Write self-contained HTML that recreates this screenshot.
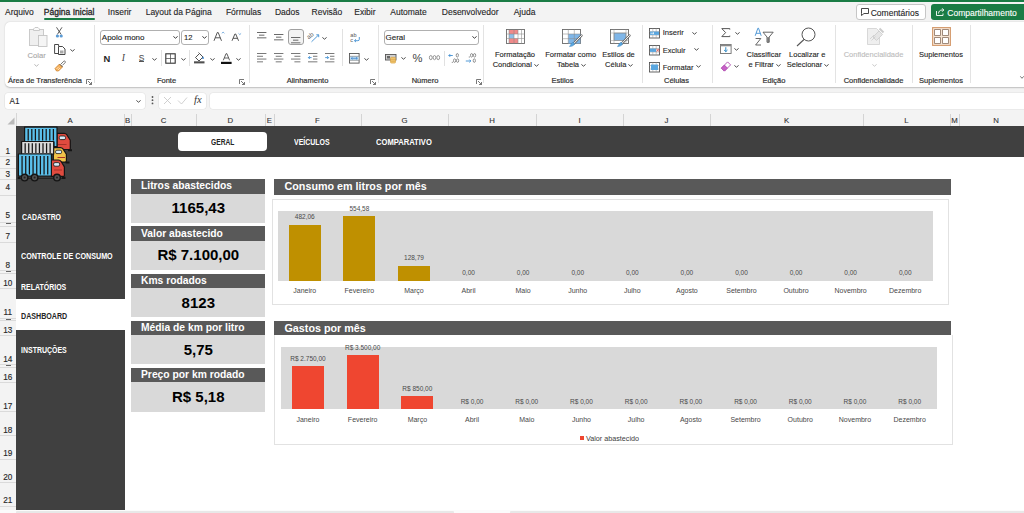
<!DOCTYPE html>
<html><head><meta charset="utf-8">
<style>
*{margin:0;padding:0;box-sizing:border-box}
html,body{width:1024px;height:513px;overflow:hidden;background:#f3f3f3;font-family:"Liberation Sans",sans-serif;position:relative}
.a{position:absolute}
.t{position:absolute;white-space:nowrap;line-height:1}
.kt{position:absolute;left:131px;width:134px;background:#595959}
.kv{position:absolute;left:131px;width:134px;background:#d9d9d9}
.hl{position:absolute;left:0;width:16px;height:1px;background:#d9d9d9}
.cl{position:absolute;top:113px;width:1px;height:13px;background:#d4d4d4}
svg{overflow:visible}
</style></head><body>
<div class="a" style="left:0px;top:0px;width:1024px;height:2px;background:#1a7c45;"></div>
<div class="t" style="left:4.97px;top:8.40px;font-size:8.50px;color:#262626;-webkit-text-stroke:0.12px currentColor;">Arquivo</div>
<div class="t" style="left:43.85px;top:8.40px;font-size:8.50px;color:#262626;-webkit-text-stroke:0.3px currentColor;">Página Inicial</div>
<div class="t" style="left:107.82px;top:8.40px;font-size:8.50px;color:#262626;-webkit-text-stroke:0.12px currentColor;">Inserir</div>
<div class="t" style="left:145.67px;top:8.40px;font-size:8.50px;color:#262626;-webkit-text-stroke:0.12px currentColor;">Layout da Página</div>
<div class="t" style="left:225.91px;top:8.40px;font-size:8.50px;color:#262626;-webkit-text-stroke:0.12px currentColor;">Fórmulas</div>
<div class="t" style="left:274.97px;top:8.40px;font-size:8.50px;color:#262626;-webkit-text-stroke:0.12px currentColor;">Dados</div>
<div class="t" style="left:311.52px;top:8.40px;font-size:8.50px;color:#262626;-webkit-text-stroke:0.12px currentColor;">Revisão</div>
<div class="t" style="left:354.25px;top:8.40px;font-size:8.50px;color:#262626;-webkit-text-stroke:0.12px currentColor;">Exibir</div>
<div class="t" style="left:390.31px;top:8.40px;font-size:8.50px;color:#262626;-webkit-text-stroke:0.12px currentColor;">Automate</div>
<div class="t" style="left:441.78px;top:8.40px;font-size:8.50px;color:#262626;-webkit-text-stroke:0.12px currentColor;">Desenvolvedor</div>
<div class="t" style="left:513.63px;top:8.40px;font-size:8.50px;color:#262626;-webkit-text-stroke:0.12px currentColor;">Ajuda</div>
<div class="a" style="left:44px;top:18px;width:51px;height:2px;background:#1a7c45;border-radius:1px"></div>
<div class="a" style="left:855.5px;top:4px;width:70px;height:16px;background:#fff;border:1px solid #c6c6c6;border-radius:3px"></div>
<svg class="a" style="left:861px;top:8px;" width="8" height="8" viewBox="0 0 8 8"><path d="M0.5 0.5h7v5h-4.5l-2.5 2v-2h0z" fill="none" stroke="#333" stroke-width="0.9" stroke-linejoin="round"/></svg>
<div class="t" style="left:870.71px;top:8.60px;font-size:8.50px;color:#262626;-webkit-text-stroke:0.12px currentColor;">Comentários</div>
<div class="a" style="left:931px;top:4px;width:100px;height:16px;background:#1a7c45;border-radius:3px"></div>
<svg class="a" style="left:936px;top:8px;" width="8" height="8" viewBox="0 0 8 8"><path d="M0.5 3v4.5h6.5V5.5" fill="none" stroke="#fff" stroke-width="0.9"/><path d="M2.5 5.5c0-2 1.5-3.5 3.5-3.5h1.5M6.2 0.3L7.8 2 6.2 3.7" fill="none" stroke="#fff" stroke-width="0.9"/></svg>
<div class="t" style="left:947.28px;top:8.60px;font-size:8.50px;color:#fff;-webkit-text-stroke:0.12px currentColor;">Compartilhamento</div>
<div class="a" style="left:5px;top:22px;width:1030px;height:65px;background:#fff;border-radius:5px;box-shadow:0 0.5px 1.5px rgba(0,0,0,0.22)"></div>
<div class="a" style="left:94px;top:25px;width:1px;height:58px;background:#e3e3e3;"></div>
<div class="a" style="left:249px;top:25px;width:1px;height:58px;background:#e3e3e3;"></div>
<div class="a" style="left:377.5px;top:25px;width:1px;height:58px;background:#e3e3e3;"></div>
<div class="a" style="left:483px;top:25px;width:1px;height:58px;background:#e3e3e3;"></div>
<div class="a" style="left:641.5px;top:25px;width:1px;height:58px;background:#e3e3e3;"></div>
<div class="a" style="left:712px;top:25px;width:1px;height:58px;background:#e3e3e3;"></div>
<div class="a" style="left:835px;top:25px;width:1px;height:58px;background:#e3e3e3;"></div>
<div class="a" style="left:911.5px;top:25px;width:1px;height:58px;background:#e3e3e3;"></div>
<div class="a" style="left:970px;top:25px;width:1px;height:58px;background:#e3e3e3;"></div>
<div class="t" style="left:8.11px;top:77.15px;font-size:7.50px;color:#333333;-webkit-text-stroke:0.2px currentColor;">Área de Transferência</div>
<div class="t" style="left:156.91px;top:77.15px;font-size:7.50px;color:#333333;-webkit-text-stroke:0.2px currentColor;">Fonte</div>
<div class="t" style="left:286.65px;top:77.15px;font-size:7.50px;color:#333333;-webkit-text-stroke:0.2px currentColor;">Alinhamento</div>
<div class="t" style="left:411.66px;top:77.15px;font-size:7.50px;color:#333333;-webkit-text-stroke:0.2px currentColor;">Número</div>
<div class="t" style="left:551.46px;top:77.15px;font-size:7.50px;color:#333333;-webkit-text-stroke:0.2px currentColor;">Estilos</div>
<div class="t" style="left:663.99px;top:77.15px;font-size:7.50px;color:#333333;-webkit-text-stroke:0.2px currentColor;">Células</div>
<div class="t" style="left:762.53px;top:77.15px;font-size:7.50px;color:#333333;-webkit-text-stroke:0.2px currentColor;">Edição</div>
<div class="t" style="left:843.69px;top:77.15px;font-size:7.50px;color:#333333;-webkit-text-stroke:0.2px currentColor;">Confidencialidade</div>
<div class="t" style="left:919.11px;top:77.15px;font-size:7.50px;color:#333333;-webkit-text-stroke:0.2px currentColor;">Suplementos</div>
<svg class="a" style="left:86px;top:78.5px;" width="6" height="6" viewBox="0 0 6 6"><path d="M0.5 5V0.5H5" fill="none" stroke="#555" stroke-width="0.8"/><path d="M2 2L5.5 5.5M5.5 3v2.5H3" fill="none" stroke="#555" stroke-width="0.8"/></svg>
<svg class="a" style="left:239px;top:78.5px;" width="6" height="6" viewBox="0 0 6 6"><path d="M0.5 5V0.5H5" fill="none" stroke="#555" stroke-width="0.8"/><path d="M2 2L5.5 5.5M5.5 3v2.5H3" fill="none" stroke="#555" stroke-width="0.8"/></svg>
<svg class="a" style="left:370px;top:78.5px;" width="6" height="6" viewBox="0 0 6 6"><path d="M0.5 5V0.5H5" fill="none" stroke="#555" stroke-width="0.8"/><path d="M2 2L5.5 5.5M5.5 3v2.5H3" fill="none" stroke="#555" stroke-width="0.8"/></svg>
<svg class="a" style="left:476px;top:78.5px;" width="6" height="6" viewBox="0 0 6 6"><path d="M0.5 5V0.5H5" fill="none" stroke="#555" stroke-width="0.8"/><path d="M2 2L5.5 5.5M5.5 3v2.5H3" fill="none" stroke="#555" stroke-width="0.8"/></svg>
<svg class="a" style="left:28px;top:27px;" width="20" height="20" viewBox="0 0 20 20"><path d="M1.5 2.5h4.5M11 2.5h4.5v6.5M15.5 18.5H1.5V2.5" fill="#f0f0f0" stroke="#c8c8c8" stroke-width="0.9"/><rect x="1.5" y="2.5" width="14" height="16" fill="#efefef" stroke="#c8c8c8" stroke-width="0.9"/><path d="M5.5 3.5V2l1.5-1.5h3L11.5 2v1.5z" fill="#fafafa" stroke="#c4c4c4" stroke-width="0.9"/><rect x="10.5" y="8.5" width="8.5" height="11" fill="#f5f5f5" stroke="#c4c4c4" stroke-width="0.9"/></svg>
<div class="t" style="left:27.52px;top:51.97px;font-size:7.60px;color:#a8a8a8;-webkit-text-stroke:0.12px currentColor;">Colar</div>
<svg class="a" style="left:34px;top:64px;" width="5" height="3" viewBox="0 0 5 3"><path d="M0.7 0.7L2.5 2.2L4.3 0.7" fill="none" stroke="#b4b4b4" stroke-width="0.95" stroke-linecap="round" stroke-linejoin="round"/></svg>
<svg class="a" style="left:55px;top:27px;" width="9" height="11" viewBox="0 0 9 11"><path d="M1.5 0.3L6.2 7.5M7 0.3L2.3 7.5" stroke="#333" stroke-width="0.8" fill="none"/><circle cx="2.4" cy="9" r="1.6" fill="#5b9bd5"/><circle cx="6.2" cy="9" r="1.6" fill="#5b9bd5"/></svg>
<svg class="a" style="left:54px;top:44px;" width="12" height="11" viewBox="0 0 12 11"><path d="M4 9.5H0.6V0.5h4v1.5" fill="none" stroke="#333" stroke-width="0.9"/><path d="M4.5 2.5h4l2.5 2.5v5.5H4.5z" fill="#fff" stroke="#333" stroke-width="0.9"/><rect x="6" y="6.5" width="3.5" height="3" fill="#aaa"/></svg>
<svg class="a" style="left:70px;top:49px;" width="5" height="3" viewBox="0 0 5 3"><path d="M0.7 0.7L2.5 2.2L4.3 0.7" fill="none" stroke="#444" stroke-width="0.95" stroke-linecap="round" stroke-linejoin="round"/></svg>
<svg class="a" style="left:54px;top:60px;" width="12" height="11" viewBox="0 0 12 11"><path d="M7 4l2.8-2.8a1 1 0 011.4 1.4L8.4 5.4" fill="#fff" stroke="#555" stroke-width="0.8"/><path d="M1 8.5L5.5 4l3 3L4.5 11H2.5z" fill="#f6b05a" stroke="#c87a20" stroke-width="0.7"/><path d="M5.8 4.2l2.8 2.8" stroke="#555" stroke-width="0.9"/><path d="M2.5 9l2.2-2.2M3.8 10.2l2.2-2.2" stroke="#fff" stroke-width="0.6"/></svg>
<div class="a" style="left:99.6px;top:29.6px;width:80px;height:15.3px;background:#fff;border:1px solid #b0b0b0;border-radius:3px"></div>
<div class="t" style="left:101.80px;top:34.03px;font-size:8.00px;color:#262626;-webkit-text-stroke:0.12px currentColor;">Apolo mono</div>
<svg class="a" style="left:173px;top:36px;" width="5" height="3" viewBox="0 0 5 3"><path d="M0.7 0.7L2.5 2.2L4.3 0.7" fill="none" stroke="#333" stroke-width="0.95" stroke-linecap="round" stroke-linejoin="round"/></svg>
<div class="a" style="left:181.4px;top:29.6px;width:28px;height:15.3px;background:#fff;border:1px solid #b0b0b0;border-radius:3px"></div>
<div class="t" style="left:184.00px;top:34.37px;font-size:7.60px;color:#262626;-webkit-text-stroke:0.12px currentColor;">12</div>
<svg class="a" style="left:202px;top:36px;" width="5" height="3" viewBox="0 0 5 3"><path d="M0.7 0.7L2.5 2.2L4.3 0.7" fill="none" stroke="#333" stroke-width="0.95" stroke-linecap="round" stroke-linejoin="round"/></svg>
<svg class="a" style="left:213px;top:31px;" width="14" height="11" viewBox="0 0 14 11"><path d="M1 9.8L4.3 1.5h0.9L8.5 9.8M2.3 6.8h4.9" fill="none" stroke="#444" stroke-width="0.9"/><path d="M8.8 2.3l1.3-1.2 1.3 1.2" fill="none" stroke="#5b9bd5" stroke-width="0.8"/></svg>
<svg class="a" style="left:231px;top:33px;" width="14" height="9" viewBox="0 0 14 9"><path d="M1 7.8L3.9 1h0.8L7.6 7.8M2.1 5.3h4.4" fill="none" stroke="#444" stroke-width="0.9"/><path d="M7.5 0.4l1.3 1.2 1.3-1.2" fill="none" stroke="#5b9bd5" stroke-width="0.8"/></svg>
<div class="t" style="left:103.60px;top:53.64px;font-size:9.40px;color:#262626; font-weight:bold;">N</div>
<div class="t" style="left:121.8px;top:52.6px;font-size:9.6px;color:#444;font-family:'Liberation Serif',serif;font-style:italic">I</div>
<div class="t" style="left:138.80px;top:54.09px;font-size:8.40px;color:#555;-webkit-text-stroke:0.12px currentColor;">S</div>
<div class="a" style="left:138.6px;top:61.3px;width:5.8px;height:0.9px;background:#555;"></div>
<svg class="a" style="left:152px;top:58px;" width="5" height="3" viewBox="0 0 5 3"><path d="M0.7 0.7L2.5 2.2L4.3 0.7" fill="none" stroke="#444" stroke-width="0.95" stroke-linecap="round" stroke-linejoin="round"/></svg>
<div class="a" style="left:189.4px;top:50px;width:1px;height:15.5px;background:#e1e1e1;"></div>
<div class="a" style="left:160.5px;top:50px;width:1px;height:15.5px;background:#e1e1e1;"></div>
<svg class="a" style="left:164.5px;top:52.5px;" width="11" height="11" viewBox="0 0 11 11"><rect x="0.8" y="0.8" width="9.4" height="9.4" fill="none" stroke="#333" stroke-width="1.1"/><path d="M5.5 0.8v9.4M0.8 5.5h9.4" stroke="#555" stroke-width="0.8"/></svg>
<svg class="a" style="left:181px;top:58px;" width="5" height="3" viewBox="0 0 5 3"><path d="M0.7 0.7L2.5 2.2L4.3 0.7" fill="none" stroke="#444" stroke-width="0.95" stroke-linecap="round" stroke-linejoin="round"/></svg>
<svg class="a" style="left:193.5px;top:52px;" width="12" height="12" viewBox="0 0 12 12"><path d="M1.5 5.5l4-4 3.5 3.5-4 4z" fill="#fff" stroke="#333" stroke-width="0.85"/><path d="M5.5 1.5l-1-1" stroke="#333" stroke-width="0.8"/><path d="M9 4.2c.6.9.9 1.5.9 1.9a.9.9 0 01-1.8 0c0-.4.3-1 .9-1.9z" fill="#2f7ac5"/><rect x="0" y="9.3" width="10.5" height="2.1" fill="#505050"/></svg>
<svg class="a" style="left:210px;top:58px;" width="5" height="3" viewBox="0 0 5 3"><path d="M0.7 0.7L2.5 2.2L4.3 0.7" fill="none" stroke="#444" stroke-width="0.95" stroke-linecap="round" stroke-linejoin="round"/></svg>
<svg class="a" style="left:220.5px;top:52.5px;" width="11" height="12" viewBox="0 0 11 12"><path d="M2.3 7.3L5 0.7h0.9l2.7 6.6M3.3 5h4.3" fill="none" stroke="#444" stroke-width="0.85"/><rect x="0" y="8.8" width="10.6" height="2.2" fill="#111"/></svg>
<svg class="a" style="left:236px;top:58px;" width="5" height="3" viewBox="0 0 5 3"><path d="M0.7 0.7L2.5 2.2L4.3 0.7" fill="none" stroke="#444" stroke-width="0.95" stroke-linecap="round" stroke-linejoin="round"/></svg>
<svg class="a" style="left:257.3px;top:32px;" width="11" height="12" viewBox="0 0 11 12"><rect x="0" y="0.0" width="9.4" height="0.9" fill="#5a5a5a"/><rect x="2" y="2.7" width="5.4" height="0.9" fill="#5a5a5a"/><rect x="0" y="5.4" width="9.4" height="0.9" fill="#5a5a5a"/></svg>
<svg class="a" style="left:274.3px;top:34px;" width="11" height="12" viewBox="0 0 11 12"><rect x="0" y="0.0" width="9.4" height="0.9" fill="#5a5a5a"/><rect x="2" y="2.7" width="5.4" height="0.9" fill="#5a5a5a"/><rect x="0" y="5.4" width="9.4" height="0.9" fill="#5a5a5a"/></svg>
<div class="a" style="left:288.3px;top:29.3px;width:15.5px;height:15.8px;background:#f3f3f3;border:1px solid #a0a0a0;border-radius:3px"></div>
<svg class="a" style="left:291.3px;top:37px;" width="11" height="12" viewBox="0 0 11 12"><rect x="0" y="0.0" width="9.4" height="0.9" fill="#5a5a5a"/><rect x="2" y="2.7" width="5.4" height="0.9" fill="#5a5a5a"/><rect x="0" y="5.4" width="9.4" height="0.9" fill="#5a5a5a"/></svg>
<svg class="a" style="left:307px;top:31px;" width="18" height="12" viewBox="0 0 18 12"><text x="0" y="6.5" font-size="6.2" fill="#555" font-family="Liberation Sans" transform="rotate(-40 3.5 5)">ab</text><path d="M4.5 10.8L11.5 4M9.3 3.8h2.4v2.4" fill="none" stroke="#3f8fd2" stroke-width="0.9"/></svg>
<svg class="a" style="left:322px;top:37px;" width="5" height="3" viewBox="0 0 5 3"><path d="M0.7 0.7L2.5 2.2L4.3 0.7" fill="none" stroke="#444" stroke-width="0.95" stroke-linecap="round" stroke-linejoin="round"/></svg>
<svg class="a" style="left:257.3px;top:53px;" width="11" height="12" viewBox="0 0 11 12"><rect x="0" y="0.0" width="9.4" height="0.9" fill="#6a6a6a"/><rect x="0" y="2.8" width="6" height="0.9" fill="#6a6a6a"/><rect x="0" y="5.6" width="9.4" height="0.9" fill="#6a6a6a"/><rect x="0" y="8.399999999999999" width="6" height="0.9" fill="#6a6a6a"/></svg>
<svg class="a" style="left:274.3px;top:53px;" width="11" height="12" viewBox="0 0 11 12"><rect x="0" y="0.0" width="9.4" height="0.9" fill="#6a6a6a"/><rect x="1.7" y="2.8" width="6" height="0.9" fill="#6a6a6a"/><rect x="0" y="5.6" width="9.4" height="0.9" fill="#6a6a6a"/><rect x="1.7" y="8.399999999999999" width="6" height="0.9" fill="#6a6a6a"/></svg>
<svg class="a" style="left:291.3px;top:53px;" width="11" height="12" viewBox="0 0 11 12"><rect x="0" y="0.0" width="9.4" height="0.9" fill="#6a6a6a"/><rect x="3.4" y="2.8" width="6" height="0.9" fill="#6a6a6a"/><rect x="0" y="5.6" width="9.4" height="0.9" fill="#6a6a6a"/><rect x="3.4" y="8.399999999999999" width="6" height="0.9" fill="#6a6a6a"/></svg>
<svg class="a" style="left:308.3px;top:53px;" width="11" height="10" viewBox="0 0 11 10"><rect x="0" y="0" width="9.4" height="0.9" fill="#6a6a6a"/><rect x="5" y="2.8" width="4.4" height="0.9" fill="#6a6a6a"/><rect x="5" y="5.6" width="4.4" height="0.9" fill="#6a6a6a"/><rect x="0" y="8.4" width="9.4" height="0.9" fill="#6a6a6a"/><path d="M3.6 4.6H0.4M1.8 3.2L0.4 4.6 1.8 6" fill="none" stroke="#3f8fd2" stroke-width="0.9"/></svg>
<svg class="a" style="left:325.3px;top:53px;" width="11" height="10" viewBox="0 0 11 10"><rect x="0" y="0" width="9.4" height="0.9" fill="#6a6a6a"/><rect x="5" y="2.8" width="4.4" height="0.9" fill="#6a6a6a"/><rect x="5" y="5.6" width="4.4" height="0.9" fill="#6a6a6a"/><rect x="0" y="8.4" width="9.4" height="0.9" fill="#6a6a6a"/><path d="M0.2 4.6h3.4M2.2 3.2L3.6 4.6 2.2 6" fill="none" stroke="#3f8fd2" stroke-width="0.9"/></svg>
<div class="a" style="left:342.3px;top:28.5px;width:1px;height:37px;background:#e1e1e1;"></div>
<svg class="a" style="left:350px;top:32px;" width="12" height="11" viewBox="0 0 12 11"><text x="0.3" y="4.8" font-size="5.6" fill="#555" font-family="Liberation Sans">ab</text><text x="0.3" y="9.8" font-size="5.6" fill="#555" font-family="Liberation Sans">c</text><path d="M9.3 5v2.3a1.4 1.4 0 01-1.4 1.4H4.6M6 7.3L4.5 8.7 6 10.1" fill="none" stroke="#3f8fd2" stroke-width="0.9"/></svg>
<svg class="a" style="left:349px;top:53px;" width="11" height="11" viewBox="0 0 11 11"><rect x="0.5" y="0.5" width="9.6" height="9.6" fill="#fff" stroke="#555" stroke-width="0.9"/><rect x="1" y="3.3" width="8.6" height="4" fill="#bcdcf5"/><path d="M0.5 3.3h9.6M0.5 7.3h9.6" stroke="#777" stroke-width="0.6"/><path d="M2.3 5.3h6M3.5 4.3L2.3 5.3l1.2 1M7.1 4.3l1.2 1-1.2 1" fill="none" stroke="#2f7ac5" stroke-width="0.7"/></svg>
<svg class="a" style="left:364px;top:58px;" width="5" height="3" viewBox="0 0 5 3"><path d="M0.7 0.7L2.5 2.2L4.3 0.7" fill="none" stroke="#444" stroke-width="0.95" stroke-linecap="round" stroke-linejoin="round"/></svg>
<div class="a" style="left:383.5px;top:29.5px;width:95px;height:15.3px;background:#fff;border:1px solid #b0b0b0;border-radius:3px"></div>
<div class="t" style="left:385.50px;top:33.93px;font-size:8.00px;color:#262626;-webkit-text-stroke:0.12px currentColor;">Geral</div>
<svg class="a" style="left:472px;top:36px;" width="5" height="3" viewBox="0 0 5 3"><path d="M0.7 0.7L2.5 2.2L4.3 0.7" fill="none" stroke="#333" stroke-width="0.95" stroke-linecap="round" stroke-linejoin="round"/></svg>
<svg class="a" style="left:385px;top:54px;" width="12" height="10" viewBox="0 0 12 10"><rect x="0.5" y="0.5" width="10.5" height="5.5" fill="#d0d0d0" stroke="#555" stroke-width="0.9"/><rect x="2" y="2" width="3" height="2.5" fill="#666"/><rect x="5.5" y="3.3" width="5" height="5.8" rx="1" fill="#f3c873" stroke="#d39a35" stroke-width="0.6"/><path d="M5.8 5.3h4.4M5.8 7.2h4.4" stroke="#c8902e" stroke-width="0.5"/></svg>
<svg class="a" style="left:401px;top:57px;" width="5" height="3" viewBox="0 0 5 3"><path d="M0.7 0.7L2.5 2.2L4.3 0.7" fill="none" stroke="#444" stroke-width="0.95" stroke-linecap="round" stroke-linejoin="round"/></svg>
<div class="t" style="left:412.6px;top:53.2px;font-size:11.2px;color:#444">%</div>
<svg class="a" style="left:429px;top:55px;" width="12" height="6" viewBox="0 0 12 6"><g fill="none" stroke="#8a8a8a" stroke-width="0.9"><ellipse cx="1.8" cy="2.6" rx="1.4" ry="2.1"/><ellipse cx="5.5" cy="2.6" rx="1.4" ry="2.1"/><ellipse cx="9.2" cy="2.6" rx="1.4" ry="2.1"/></g></svg>
<div class="a" style="left:444.4px;top:50.5px;width:1px;height:15.5px;background:#e1e1e1;"></div>
<svg class="a" style="left:448px;top:53px;" width="12" height="11" viewBox="0 0 12 11"><path d="M4.8 2.5H0.8M2.2 1.1L0.8 2.5l1.4 1.4" fill="none" stroke="#3f8fd2" stroke-width="0.9"/><g fill="none" stroke="#777" stroke-width="0.8"><ellipse cx="9.3" cy="2.3" rx="1.1" ry="1.8"/><ellipse cx="6.6" cy="7.6" rx="1.1" ry="1.8"/><ellipse cx="9.6" cy="7.6" rx="1.1" ry="1.8"/></g><rect x="3.8" y="8.8" width="1" height="1" fill="#777"/></svg>
<svg class="a" style="left:465px;top:53px;" width="12" height="11" viewBox="0 0 12 11"><g fill="none" stroke="#777" stroke-width="0.8"><ellipse cx="6.6" cy="2.3" rx="1.1" ry="1.8"/><ellipse cx="9.6" cy="2.3" rx="1.1" ry="1.8"/><ellipse cx="9.3" cy="7.6" rx="1.1" ry="1.8"/></g><rect x="3.8" y="3.5" width="1" height="1" fill="#777"/><path d="M0.8 8h5M4.4 6.6L5.8 8 4.4 9.4" fill="none" stroke="#3f8fd2" stroke-width="0.9"/></svg>
<svg class="a" style="left:506px;top:29px;" width="19" height="15" viewBox="0 0 19 15"><rect x="0.5" y="0.5" width="18" height="14" fill="#fff" stroke="#6a6a6a" stroke-width="0.9"/><rect x="3" y="1" width="9" height="4" fill="#f08a8a"/><rect x="3" y="5" width="5" height="4.5" fill="#8fbfe8"/><rect x="3" y="9.5" width="9" height="4.5" fill="#f08a8a"/><path d="M3 0.5v14M8 0.5v14M12 0.5v14M15.5 0.5v14M0.5 5h18M0.5 9.5h18" stroke="#8a8a8a" stroke-width="0.55"/></svg>
<svg class="a" style="left:561.5px;top:29px;" width="22" height="19" viewBox="0 0 22 19"><rect x="0.5" y="0.5" width="18" height="14" fill="#fff" stroke="#6a6a6a" stroke-width="0.9"/><rect x="6.3" y="5" width="12" height="9.5" fill="#7fb6e8"/><path d="M6.3 0.5v14M12.3 0.5v14M0.5 5h18M0.5 9.7h18" stroke="#8a8a8a" stroke-width="0.55"/><path d="M19.5 6.5L11.5 14.8" stroke="#6a6a6a" stroke-width="2.4" stroke-linecap="round"/><path d="M19.5 6.5L11.5 14.8" stroke="#fff" stroke-width="1" stroke-linecap="round"/><path d="M9.8 14c1.2-1 2.8-.2 2.5 1.2-.3 1.2-2 2.2-4.8 2.4.9-1 1.3-2.8 2.3-3.6z" fill="#5aa7e0" stroke="#3c84c0" stroke-width="0.5"/></svg>
<svg class="a" style="left:609.5px;top:29px;" width="22" height="19" viewBox="0 0 22 19"><rect x="0.5" y="0.5" width="18" height="14" fill="#fff" stroke="#6a6a6a" stroke-width="0.9"/><rect x="4" y="4" width="12" height="7.5" fill="#7fb6e8" stroke="#6a6a6a" stroke-width="0.5"/><path d="M0.5 4h18M0.5 11.5h18M4 0.5v14M16 0.5v14" stroke="#9a9a9a" stroke-width="0.5"/><path d="M19.5 6.5L11.5 14.8" stroke="#6a6a6a" stroke-width="2.4" stroke-linecap="round"/><path d="M19.5 6.5L11.5 14.8" stroke="#fff" stroke-width="1" stroke-linecap="round"/><path d="M9.8 14c1.2-1 2.8-.2 2.5 1.2-.3 1.2-2 2.2-4.8 2.4.9-1 1.3-2.8 2.3-3.6z" fill="#5aa7e0" stroke="#3c84c0" stroke-width="0.5"/></svg>
<div class="t" style="left:494.99px;top:51.15px;font-size:7.50px;color:#262626;-webkit-text-stroke:0.12px currentColor;">Formatação</div>
<div class="t" style="left:492.66px;top:61.45px;font-size:7.50px;color:#262626;-webkit-text-stroke:0.12px currentColor;">Condicional</div>
<svg class="a" style="left:534px;top:64px;" width="5" height="3" viewBox="0 0 5 3"><path d="M0.7 0.7L2.5 2.2L4.3 0.7" fill="none" stroke="#444" stroke-width="0.95" stroke-linecap="round" stroke-linejoin="round"/></svg>
<div class="t" style="left:545.28px;top:51.15px;font-size:7.50px;color:#262626;-webkit-text-stroke:0.12px currentColor;">Formatar como</div>
<div class="t" style="left:556.90px;top:61.45px;font-size:7.50px;color:#262626;-webkit-text-stroke:0.12px currentColor;">Tabela</div>
<svg class="a" style="left:581px;top:64px;" width="5" height="3" viewBox="0 0 5 3"><path d="M0.7 0.7L2.5 2.2L4.3 0.7" fill="none" stroke="#444" stroke-width="0.95" stroke-linecap="round" stroke-linejoin="round"/></svg>
<div class="t" style="left:602.24px;top:51.15px;font-size:7.50px;color:#262626;-webkit-text-stroke:0.12px currentColor;">Estilos de</div>
<div class="t" style="left:605.12px;top:61.45px;font-size:7.50px;color:#262626;-webkit-text-stroke:0.12px currentColor;">Célula</div>
<svg class="a" style="left:628px;top:64px;" width="5" height="3" viewBox="0 0 5 3"><path d="M0.7 0.7L2.5 2.2L4.3 0.7" fill="none" stroke="#444" stroke-width="0.95" stroke-linecap="round" stroke-linejoin="round"/></svg>
<svg class="a" style="left:649px;top:27.5px;" width="12" height="11" viewBox="0 0 12 11"><rect x="0.5" y="0.5" width="10" height="9.5" fill="#fff" stroke="#555" stroke-width="0.9"/><path d="M0.5 3.5h10M0.5 7h10M3.8 0.5v9.5M7.2 0.5v9.5" stroke="#9a9a9a" stroke-width="0.55"/><rect x="1" y="3.6" width="9" height="3.3" fill="#5aa7e0"/><path d="M1.5 5.25h3.5M3.8 4.1L5 5.25 3.8 6.4" fill="none" stroke="#fff" stroke-width="0.7"/></svg>
<div class="t" style="left:662.70px;top:29.47px;font-size:7.60px;color:#262626;-webkit-text-stroke:0.12px currentColor;">Inserir</div>
<svg class="a" style="left:692px;top:32px;" width="5" height="3" viewBox="0 0 5 3"><path d="M0.7 0.7L2.5 2.2L4.3 0.7" fill="none" stroke="#444" stroke-width="0.95" stroke-linecap="round" stroke-linejoin="round"/></svg>
<svg class="a" style="left:649px;top:44.5px;" width="12" height="11" viewBox="0 0 12 11"><rect x="0.5" y="0.5" width="10" height="9.5" fill="#fff" stroke="#555" stroke-width="0.9"/><path d="M0.5 3.5h10M0.5 7h10M3.8 0.5v9.5M7.2 0.5v9.5" stroke="#9a9a9a" stroke-width="0.55"/><rect x="1" y="3.6" width="6" height="3.3" fill="#5aa7e0"/><path d="M7.6 3.8l2.4 2.9M10 3.8L7.6 6.7" stroke="#e05050" stroke-width="0.8"/></svg>
<div class="t" style="left:662.70px;top:46.77px;font-size:7.60px;color:#262626;-webkit-text-stroke:0.12px currentColor;">Excluir</div>
<svg class="a" style="left:694px;top:48px;" width="5" height="3" viewBox="0 0 5 3"><path d="M0.7 0.7L2.5 2.2L4.3 0.7" fill="none" stroke="#444" stroke-width="0.95" stroke-linecap="round" stroke-linejoin="round"/></svg>
<svg class="a" style="left:649px;top:61.5px;" width="12" height="11" viewBox="0 0 12 11"><rect x="0.5" y="0.5" width="10" height="9.5" fill="#fff" stroke="#555" stroke-width="0.9"/><path d="M0.5 3.5h10M0.5 7h10M3.8 0.5v9.5M7.2 0.5v9.5" stroke="#9a9a9a" stroke-width="0.55"/><rect x="2" y="2.5" width="7" height="5.5" fill="#5aa7e0"/></svg>
<div class="t" style="left:662.70px;top:63.57px;font-size:7.60px;color:#262626;-webkit-text-stroke:0.12px currentColor;">Formatar</div>
<svg class="a" style="left:696px;top:65px;" width="5" height="3" viewBox="0 0 5 3"><path d="M0.7 0.7L2.5 2.2L4.3 0.7" fill="none" stroke="#444" stroke-width="0.95" stroke-linecap="round" stroke-linejoin="round"/></svg>
<svg class="a" style="left:721px;top:27.5px;" width="10" height="10" viewBox="0 0 10 10"><path d="M8.8 1.6V0.6H0.8L4.6 4.6 0.8 8.6h8V7.6" fill="none" stroke="#444" stroke-width="0.9"/></svg>
<svg class="a" style="left:735px;top:32px;" width="5" height="3" viewBox="0 0 5 3"><path d="M0.7 0.7L2.5 2.2L4.3 0.7" fill="none" stroke="#444" stroke-width="0.95" stroke-linecap="round" stroke-linejoin="round"/></svg>
<svg class="a" style="left:720px;top:44px;" width="12" height="10" viewBox="0 0 12 10"><rect x="0.5" y="0.5" width="10.6" height="9" fill="#fff" stroke="#707070" stroke-width="0.9"/><rect x="0.5" y="0.5" width="10.6" height="1.8" fill="#888"/><path d="M5.8 3.2v4.5M4.1 6L5.8 7.7 7.5 6" fill="none" stroke="#2f8ac5" stroke-width="1"/></svg>
<svg class="a" style="left:734px;top:48px;" width="5" height="3" viewBox="0 0 5 3"><path d="M0.7 0.7L2.5 2.2L4.3 0.7" fill="none" stroke="#444" stroke-width="0.95" stroke-linecap="round" stroke-linejoin="round"/></svg>
<svg class="a" style="left:719.5px;top:60.5px;" width="12" height="11" viewBox="0 0 12 11"><path d="M7.6 0.9l3 3-6.2 6.2-3-3z" fill="#fff" stroke="#b04cb0" stroke-width="0.9" stroke-linejoin="round"/><path d="M4.4 4.1l3 3-3 3-3-3z" fill="#c860c8" stroke="#b04cb0" stroke-width="0.9" stroke-linejoin="round"/></svg>
<svg class="a" style="left:734px;top:65px;" width="5" height="3" viewBox="0 0 5 3"><path d="M0.7 0.7L2.5 2.2L4.3 0.7" fill="none" stroke="#444" stroke-width="0.95" stroke-linecap="round" stroke-linejoin="round"/></svg>
<svg class="a" style="left:754px;top:27px;" width="21" height="19" viewBox="0 0 21 19"><path d="M1.2 8.8L3.9 1.2h0.6L7.2 8.8M2.1 6.3h4.2" fill="none" stroke="#3f8fd2" stroke-width="0.9"/><path d="M1.6 11.5h5.2L1.6 18h5.4" fill="none" stroke="#555" stroke-width="0.9"/><path d="M9 5.2h10.2l-4 4.8v5.3h-2.2V10z" fill="#fff" stroke="#555" stroke-width="0.9" stroke-linejoin="round"/><rect x="13.2" y="10.2" width="1.9" height="5" fill="#777"/></svg>
<div class="t" style="left:746.61px;top:51.15px;font-size:7.50px;color:#262626;-webkit-text-stroke:0.12px currentColor;">Classificar</div>
<div class="t" style="left:748.44px;top:61.45px;font-size:7.50px;color:#262626;-webkit-text-stroke:0.12px currentColor;">e Filtrar</div>
<svg class="a" style="left:776px;top:64px;" width="5" height="3" viewBox="0 0 5 3"><path d="M0.7 0.7L2.5 2.2L4.3 0.7" fill="none" stroke="#444" stroke-width="0.95" stroke-linecap="round" stroke-linejoin="round"/></svg>
<div class="t" style="left:789.07px;top:51.15px;font-size:7.50px;color:#262626;-webkit-text-stroke:0.12px currentColor;">Localizar e</div>
<div class="t" style="left:786.73px;top:61.45px;font-size:7.50px;color:#262626;-webkit-text-stroke:0.12px currentColor;">Selecionar</div>
<svg class="a" style="left:824px;top:64px;" width="5" height="3" viewBox="0 0 5 3"><path d="M0.7 0.7L2.5 2.2L4.3 0.7" fill="none" stroke="#444" stroke-width="0.95" stroke-linecap="round" stroke-linejoin="round"/></svg>
<svg class="a" style="left:796px;top:27px;" width="22" height="20" viewBox="0 0 22 20"><circle cx="12.5" cy="7.5" r="6.5" fill="#fff" stroke="#555" stroke-width="1"/><path d="M8 12.5L1 19" stroke="#555" stroke-width="1.1"/></svg>
<svg class="a" style="left:866px;top:27px;" width="19" height="19" viewBox="0 0 19 19"><path d="M1.5 1.5h9l3 3v13h-12z" fill="#efefef" stroke="#cfcfcf" stroke-width="0.8"/><path d="M7 10l6-6 3.5 3.5-6 6z" fill="#e6e6e6" stroke="#cccccc" stroke-width="0.8"/><path d="M13.5 1.5l4 4" stroke="#cccccc" stroke-width="2"/><path d="M4 12l4-4M5.5 13.5l4-4" stroke="#c8c8c8" stroke-width="0.7"/></svg>
<div class="t" style="left:843.69px;top:51.05px;font-size:7.50px;color:#bdbdbd;-webkit-text-stroke:0.12px currentColor;">Confidencialidade</div>
<svg class="a" style="left:872px;top:64px;" width="5" height="3" viewBox="0 0 5 3"><path d="M0.7 0.7L2.5 2.2L4.3 0.7" fill="none" stroke="#c6c6c6" stroke-width="0.95" stroke-linecap="round" stroke-linejoin="round"/></svg>
<svg class="a" style="left:932px;top:27px;" width="19" height="19" viewBox="0 0 19 19"><rect x="0.6" y="0.6" width="17.8" height="17.8" fill="#f7e6d6" stroke="#d49a6c" stroke-width="1.1"/><g fill="#fff" stroke="#8a7262" stroke-width="0.8"><rect x="2.6" y="2.6" width="5.8" height="5.8"/><rect x="10.6" y="2.6" width="5.8" height="5.8"/><rect x="2.6" y="10.6" width="5.8" height="5.8"/><rect x="10.6" y="10.6" width="5.8" height="5.8"/></g></svg>
<div class="t" style="left:919.11px;top:51.05px;font-size:7.50px;color:#262626;-webkit-text-stroke:0.12px currentColor;">Suplementos</div>
<svg class="a" style="left:1020px;top:76px;" width="4" height="3" viewBox="0 0 4 3"><path d="M0.3 0.3L2 2.3 3.7 0.3" fill="none" stroke="#555" stroke-width="0.8"/></svg>
<div class="a" style="left:5px;top:93px;width:140px;height:16px;background:#fff;border-radius:3px;box-shadow:0 0 0 0.6px #e2e2e2"></div>
<div class="t" style="left:9.50px;top:97.98px;font-size:8.18px;color:#262626;-webkit-text-stroke:0.12px currentColor;">A1</div>
<svg class="a" style="left:136px;top:100px;" width="5" height="3" viewBox="0 0 5 3"><path d="M0.7 0.7L2.5 2.2L4.3 0.7" fill="none" stroke="#444" stroke-width="0.95" stroke-linecap="round" stroke-linejoin="round"/></svg>
<svg class="a" style="left:151px;top:95px;" width="3" height="11" viewBox="0 0 3 11"><circle cx="1.5" cy="2" r="0.9" fill="#555"/><circle cx="1.5" cy="5.2" r="0.9" fill="#555"/><circle cx="1.5" cy="8.4" r="0.9" fill="#555"/></svg>
<div class="a" style="left:159px;top:93px;width:47px;height:16px;background:#fff;border-radius:3px;box-shadow:0 0 0 0.6px #e2e2e2"></div>
<svg class="a" style="left:163px;top:96px;" width="9" height="9" viewBox="0 0 9 9"><path d="M1 1l7 7M8 1l-7 7" stroke="#c4c4c4" stroke-width="0.8"/></svg>
<svg class="a" style="left:177px;top:96px;" width="11" height="9" viewBox="0 0 11 9"><path d="M1 4.5l3.5 3.5L10 1.5" fill="none" stroke="#c4c4c4" stroke-width="0.8"/></svg>
<div class="t" style="left:194px;top:94.5px;font-size:10.5px;color:#333;font-family:'Liberation Serif',serif;font-style:italic">fx</div>
<div class="a" style="left:210px;top:93px;width:830px;height:16px;background:#fff;border-radius:3px;box-shadow:0 0 0 0.6px #e2e2e2"></div>
<div class="a" style="left:16px;top:113px;width:1008px;height:13px;background:#f3f3f3;"></div>
<div class="a" style="left:0px;top:125.5px;width:1024px;height:1px;background:#d6d6d6;"></div>
<div class="a" style="left:16px;top:113px;width:1px;height:13px;background:#d6d6d6;"></div>
<svg class="a" style="left:7px;top:117px;" width="8" height="8" viewBox="0 0 8 8"><polygon points="7.5,0.5 7.5,7.5 0.5,7.5" fill="#b9b9b9"/></svg>
<div class="t" style="left:67.40px;top:117.00px;font-size:7.80px;color:#333;-webkit-text-stroke:0.12px currentColor;">A</div>
<div class="a" style="left:124px;top:114px;width:1px;height:12px;background:#d4d4d4;"></div>
<div class="t" style="left:124.90px;top:117.00px;font-size:7.80px;color:#333;-webkit-text-stroke:0.12px currentColor;">B</div>
<div class="a" style="left:131px;top:114px;width:1px;height:12px;background:#d4d4d4;"></div>
<div class="t" style="left:160.68px;top:117.00px;font-size:7.80px;color:#333;-webkit-text-stroke:0.12px currentColor;">C</div>
<div class="a" style="left:196px;top:114px;width:1px;height:12px;background:#d4d4d4;"></div>
<div class="t" style="left:227.53px;top:117.00px;font-size:7.80px;color:#333;-webkit-text-stroke:0.12px currentColor;">D</div>
<div class="a" style="left:265px;top:114px;width:1px;height:12px;background:#d4d4d4;"></div>
<div class="t" style="left:266.75px;top:117.00px;font-size:7.80px;color:#333;-webkit-text-stroke:0.12px currentColor;">E</div>
<div class="a" style="left:274px;top:114px;width:1px;height:12px;background:#d4d4d4;"></div>
<div class="t" style="left:315.12px;top:117.00px;font-size:7.80px;color:#333;-webkit-text-stroke:0.12px currentColor;">F</div>
<div class="a" style="left:361px;top:114px;width:1px;height:12px;background:#d4d4d4;"></div>
<div class="t" style="left:401.47px;top:117.00px;font-size:7.80px;color:#333;-webkit-text-stroke:0.12px currentColor;">G</div>
<div class="a" style="left:448px;top:114px;width:1px;height:12px;background:#d4d4d4;"></div>
<div class="t" style="left:489.18px;top:117.00px;font-size:7.80px;color:#333;-webkit-text-stroke:0.12px currentColor;">H</div>
<div class="a" style="left:536px;top:114px;width:1px;height:12px;background:#d4d4d4;"></div>
<div class="t" style="left:578.42px;top:117.00px;font-size:7.80px;color:#333;-webkit-text-stroke:0.12px currentColor;">I</div>
<div class="a" style="left:623px;top:114px;width:1px;height:12px;background:#d4d4d4;"></div>
<div class="t" style="left:664.55px;top:117.00px;font-size:7.80px;color:#333;-webkit-text-stroke:0.12px currentColor;">J</div>
<div class="a" style="left:710px;top:114px;width:1px;height:12px;background:#d4d4d4;"></div>
<div class="t" style="left:783.90px;top:117.00px;font-size:7.80px;color:#333;-webkit-text-stroke:0.12px currentColor;">K</div>
<div class="a" style="left:863px;top:114px;width:1px;height:12px;background:#d4d4d4;"></div>
<div class="t" style="left:904.33px;top:117.00px;font-size:7.80px;color:#333;-webkit-text-stroke:0.12px currentColor;">L</div>
<div class="a" style="left:950px;top:114px;width:1px;height:12px;background:#d4d4d4;"></div>
<div class="t" style="left:951.25px;top:117.00px;font-size:7.80px;color:#333;-webkit-text-stroke:0.12px currentColor;">M</div>
<div class="a" style="left:959px;top:114px;width:1px;height:12px;background:#d4d4d4;"></div>
<div class="t" style="left:993.18px;top:117.00px;font-size:7.80px;color:#333;-webkit-text-stroke:0.12px currentColor;">N</div>
<div class="a" style="left:0px;top:126px;width:1024px;height:384px;background:#fff;"></div>
<div class="a" style="left:0px;top:126px;width:16px;height:384px;background:#f3f3f3;"></div>
<div class="a" style="left:16px;top:126px;width:109px;height:384px;background:#404040;"></div>
<div class="a" style="left:125px;top:126px;width:899px;height:31px;background:#404040;"></div>
<div class="a" style="left:16px;top:299px;width:109px;height:31px;background:#fff;"></div>
<div class="a" style="left:0px;top:510px;width:1024px;height:3px;background:#fbfbfb;"></div>
<div class="a" style="left:16px;top:511px;width:438px;height:2px;background:#e8e8e8;border-radius:1px 1px 0 0"></div>
<div class="a" style="left:510px;top:511px;width:514px;height:2px;background:#e8e8e8;border-radius:1px 0 0 0"></div>
<div class="a" style="left:0px;top:156px;width:16px;height:1px;background:#dadada;"></div>
<div class="a" style="left:0px;top:168px;width:16px;height:1px;background:#dadada;"></div>
<div class="a" style="left:0px;top:179px;width:16px;height:1px;background:#dadada;"></div>
<div class="a" style="left:0px;top:195px;width:16px;height:1px;background:#dadada;"></div>
<div class="a" style="left:0px;top:222px;width:16px;height:1px;background:#dadada;"></div>
<div class="a" style="left:0px;top:226px;width:16px;height:1px;background:#dadada;"></div>
<div class="a" style="left:0px;top:242px;width:16px;height:1px;background:#dadada;"></div>
<div class="a" style="left:0px;top:270px;width:16px;height:1px;background:#dadada;"></div>
<div class="a" style="left:0px;top:273px;width:16px;height:1px;background:#dadada;"></div>
<div class="a" style="left:0px;top:288px;width:16px;height:1px;background:#dadada;"></div>
<div class="a" style="left:0px;top:318px;width:16px;height:1px;background:#dadada;"></div>
<div class="a" style="left:0px;top:320px;width:16px;height:1px;background:#dadada;"></div>
<div class="a" style="left:0px;top:335px;width:16px;height:1px;background:#dadada;"></div>
<div class="a" style="left:0px;top:364px;width:16px;height:1px;background:#dadada;"></div>
<div class="a" style="left:0px;top:367px;width:16px;height:1px;background:#dadada;"></div>
<div class="a" style="left:0px;top:382px;width:16px;height:1px;background:#dadada;"></div>
<div class="a" style="left:0px;top:411px;width:16px;height:1px;background:#dadada;"></div>
<div class="a" style="left:0px;top:435px;width:16px;height:1px;background:#dadada;"></div>
<div class="a" style="left:0px;top:459px;width:16px;height:1px;background:#dadada;"></div>
<div class="a" style="left:0px;top:482px;width:16px;height:1px;background:#dadada;"></div>
<div class="a" style="left:0px;top:506px;width:16px;height:1px;background:#dadada;"></div>
<div class="t" style="left:5.52px;top:147.86px;font-size:8.20px;color:#2a2a2a;-webkit-text-stroke:0.15px currentColor;">1</div>
<div class="t" style="left:5.52px;top:158.66px;font-size:8.20px;color:#2a2a2a;-webkit-text-stroke:0.15px currentColor;">2</div>
<div class="t" style="left:5.52px;top:170.66px;font-size:8.20px;color:#2a2a2a;-webkit-text-stroke:0.15px currentColor;">3</div>
<div class="t" style="left:5.52px;top:183.76px;font-size:8.20px;color:#2a2a2a;-webkit-text-stroke:0.15px currentColor;">4</div>
<div class="t" style="left:5.52px;top:212.16px;font-size:8.20px;color:#2a2a2a;-webkit-text-stroke:0.15px currentColor;">5</div>
<div class="t" style="left:5.52px;top:232.66px;font-size:8.20px;color:#2a2a2a;-webkit-text-stroke:0.15px currentColor;">7</div>
<div class="t" style="left:5.52px;top:261.96px;font-size:8.20px;color:#2a2a2a;-webkit-text-stroke:0.15px currentColor;">8</div>
<div class="t" style="left:3.24px;top:280.06px;font-size:8.20px;color:#2a2a2a;-webkit-text-stroke:0.15px currentColor;">10</div>
<div class="t" style="left:3.54px;top:308.76px;font-size:8.20px;color:#2a2a2a;-webkit-text-stroke:0.15px currentColor;">11</div>
<div class="t" style="left:3.24px;top:327.26px;font-size:8.20px;color:#2a2a2a;-webkit-text-stroke:0.15px currentColor;">13</div>
<div class="t" style="left:3.24px;top:355.96px;font-size:8.20px;color:#2a2a2a;-webkit-text-stroke:0.15px currentColor;">14</div>
<div class="t" style="left:3.24px;top:374.36px;font-size:8.20px;color:#2a2a2a;-webkit-text-stroke:0.15px currentColor;">16</div>
<div class="t" style="left:3.24px;top:403.26px;font-size:8.20px;color:#2a2a2a;-webkit-text-stroke:0.15px currentColor;">17</div>
<div class="t" style="left:3.24px;top:426.86px;font-size:8.20px;color:#2a2a2a;-webkit-text-stroke:0.15px currentColor;">18</div>
<div class="t" style="left:3.24px;top:450.46px;font-size:8.20px;color:#2a2a2a;-webkit-text-stroke:0.15px currentColor;">19</div>
<div class="t" style="left:3.24px;top:473.86px;font-size:8.20px;color:#2a2a2a;-webkit-text-stroke:0.15px currentColor;">20</div>
<div class="t" style="left:3.24px;top:497.26px;font-size:8.20px;color:#2a2a2a;-webkit-text-stroke:0.15px currentColor;">21</div>
<div class="a" style="left:6px;top:223px;width:5px;height:1px;background:#666;"></div>
<div class="a" style="left:6px;top:271px;width:5px;height:1px;background:#666;"></div>
<div class="a" style="left:6px;top:319px;width:5px;height:1px;background:#666;"></div>
<div class="a" style="left:6px;top:365px;width:5px;height:1px;background:#666;"></div>
<svg class="a" style="left:14px;top:124px;" width="64" height="64" viewBox="0 0 64 64">
<g stroke="#151515" stroke-width="1.2" stroke-linejoin="round">
<path d="M43 9.3h7.2c1.2 0 2 .5 2.6 1.4l3.5 5.6v8.2a1 1 0 01-1 1H43z" fill="#e04b3f"/>
<rect x="10.6" y="3.1" width="32.4" height="19.6" fill="#5bc0eb"/>
<path d="M39.3 23.6h7.2c1.1 0 1.9.5 2.5 1.3l3.4 5.3v6.9a1 1 0 01-1 1H39.3z" fill="#f2c44a"/>
<rect x="7.6" y="17.5" width="32.1" height="12.5" fill="#d9d9d9"/>
<path d="M37.4 36h7.1c1.1 0 1.9.5 2.5 1.3l3.4 5.6v8.5a1 1 0 01-1 1H37.4z" fill="#e04b3f"/>
<rect x="4.4" y="30" width="33" height="22" fill="#5bc0eb"/>
</g>
<g stroke="#151515" stroke-width="1.25">
<path d="M14.20 5V16.5M17.80 5V16.5M21.40 5V16.5M25.00 5V16.5M28.60 5V16.5M32.20 5V16.5M35.80 5V16.5M39.40 5V16.5"/>
<path d="M11.17 19.3V29M14.73 19.3V29M18.30 19.3V29M21.87 19.3V29M25.43 19.3V29M29.00 19.3V29M32.57 19.3V29M36.13 19.3V29"/>
<path d="M8.07 32V50.5M11.73 32V50.5M15.40 32V50.5M19.07 32V50.5M22.73 32V50.5M26.40 32V50.5M30.07 32V50.5M33.73 32V50.5"/>
</g>
<path d="M40 17.6v4.8" stroke="#151515" stroke-width="1"/>
<rect x="45.3" y="12" width="6.2" height="3.6" rx="1.4" fill="#d8ecf7" stroke="#151515" stroke-width="0.8"/>
<rect x="41.6" y="26.2" width="6" height="3.4" rx="1.3" fill="#d8ecf7" stroke="#151515" stroke-width="0.8"/>
<rect x="39.6" y="38.6" width="6" height="3.6" rx="1.4" fill="#d8ecf7" stroke="#151515" stroke-width="0.8"/>
<path d="M44 20.5h8.5M43.5 33.5h7.5M40 46h8" stroke="#a83228" stroke-width="1"/>
<path d="M54 26.3h4M51.5 38.6h4" stroke="#151515" stroke-width="2"/>
<path d="M3.7 53.8h47.8" stroke="#151515" stroke-width="2.2"/>
<path d="M6 53.8h42" stroke="#555" stroke-width="0.8"/>
<g fill="#505050" stroke="#151515" stroke-width="1.4">
<circle cx="10.6" cy="53.6" r="3.3"/><circle cx="20.6" cy="53.6" r="3.3"/><circle cx="43" cy="53.6" r="3.3"/>
</g>
<g fill="#222"><circle cx="10.6" cy="53.6" r="1"/><circle cx="20.6" cy="53.6" r="1"/><circle cx="43" cy="53.6" r="1"/></g>
</svg>
<div class="a" style="left:178px;top:132px;width:89px;height:19px;background:#fff;border-radius:4px"></div>
<div class="t" style="left:210.75px;top:138.19px;font-size:8.40px;color:#262626; font-weight:bold;transform:scaleX(0.799);transform-origin:0 0;">GERAL</div>
<div class="t" style="left:294.00px;top:138.19px;font-size:8.40px;color:#fff; font-weight:bold;transform:scaleX(0.833);transform-origin:0 0;">VEÍCULOS</div>
<div class="t" style="left:375.50px;top:138.19px;font-size:8.40px;color:#fff; font-weight:bold;transform:scaleX(0.907);transform-origin:0 0;">COMPARATIVO</div>
<div class="t" style="left:21.50px;top:213.47px;font-size:8.30px;color:#fff; font-weight:bold;transform:scaleX(0.829);transform-origin:0 0;">CADASTRO</div>
<div class="t" style="left:21.25px;top:252.47px;font-size:8.30px;color:#fff; font-weight:bold;transform:scaleX(0.865);transform-origin:0 0;">CONTROLE DE CONSUMO</div>
<div class="t" style="left:21.25px;top:282.72px;font-size:8.30px;color:#fff; font-weight:bold;transform:scaleX(0.841);transform-origin:0 0;">RELATÓRIOS</div>
<div class="t" style="left:21.25px;top:312.47px;font-size:8.30px;color:#262626; font-weight:bold;transform:scaleX(0.857);transform-origin:0 0;">DASHBOARD</div>
<div class="t" style="left:21.25px;top:345.72px;font-size:8.30px;color:#fff; font-weight:bold;transform:scaleX(0.841);transform-origin:0 0;">INSTRUÇÕES</div>
<div class="a" style="left:131px;top:179px;width:134px;height:15px;background:#595959;"></div>
<div class="a" style="left:131px;top:194px;width:134px;height:29px;background:#d9d9d9;"></div>
<div class="t" style="left:141.00px;top:181.08px;font-size:10.30px;color:#fff; font-weight:bold;">Litros abastecidos</div>
<div class="t" style="left:171.61px;top:199.70px;font-size:15.00px;color:#000; font-weight:bold;">1165,43</div>
<div class="a" style="left:131px;top:226px;width:134px;height:15px;background:#595959;"></div>
<div class="a" style="left:131px;top:241px;width:134px;height:29px;background:#d9d9d9;"></div>
<div class="t" style="left:141.00px;top:228.98px;font-size:10.30px;color:#fff; font-weight:bold;">Valor abastecido</div>
<div class="t" style="left:157.44px;top:246.60px;font-size:15.00px;color:#000; font-weight:bold;">R$ 7.100,00</div>
<div class="a" style="left:131px;top:273.5px;width:134px;height:14.5px;background:#595959;"></div>
<div class="a" style="left:131px;top:288px;width:134px;height:29px;background:#d9d9d9;"></div>
<div class="t" style="left:141.00px;top:275.58px;font-size:10.30px;color:#fff; font-weight:bold;">Kms rodados</div>
<div class="t" style="left:181.62px;top:294.50px;font-size:15.00px;color:#000; font-weight:bold;">8123</div>
<div class="a" style="left:131px;top:320.5px;width:134px;height:14.5px;background:#595959;"></div>
<div class="a" style="left:131px;top:335px;width:134px;height:29px;background:#d9d9d9;"></div>
<div class="t" style="left:141.00px;top:322.58px;font-size:10.30px;color:#fff; font-weight:bold;">Média de km por litro</div>
<div class="t" style="left:183.70px;top:341.50px;font-size:15.00px;color:#000; font-weight:bold;">5,75</div>
<div class="a" style="left:131px;top:368px;width:134px;height:14px;background:#595959;"></div>
<div class="a" style="left:131px;top:382px;width:134px;height:30px;background:#d9d9d9;"></div>
<div class="t" style="left:141.00px;top:370.08px;font-size:10.30px;color:#fff; font-weight:bold;">Preço por km rodado</div>
<div class="t" style="left:172.03px;top:388.50px;font-size:15.00px;color:#000; font-weight:bold;">R$ 5,18</div>
<div class="a" style="left:274px;top:179px;width:677px;height:15.5px;background:#595959;"></div>
<div class="t" style="left:284.50px;top:181.00px;font-size:10.75px;color:#fff; font-weight:bold;">Consumo em litros por mês</div>
<div class="a" style="left:272px;top:199px;width:677px;height:106px;background:#fff;border:1px solid #e2e2e2"></div>
<div class="a" style="left:277.5px;top:211px;width:655px;height:70px;background:#d9d9d9;"></div>
<div class="a" style="left:288.8px;top:224.5px;width:32px;height:56.2px;background:#bf9000;"></div>
<div class="t" style="left:294.85px;top:214.06px;font-size:6.50px;color:#4a4a4a;">482,06</div>
<div class="t" style="left:293.31px;top:287.27px;font-size:7.00px;color:#484848;">Janeiro</div>
<div class="a" style="left:343.4px;top:216.0px;width:32px;height:64.7px;background:#bf9000;"></div>
<div class="t" style="left:349.44px;top:205.60px;font-size:6.50px;color:#4a4a4a;">554,58</div>
<div class="t" style="left:344.59px;top:287.27px;font-size:7.00px;color:#484848;">Fevereiro</div>
<div class="a" style="left:398.0px;top:265.7px;width:32px;height:15.0px;background:#bf9000;"></div>
<div class="t" style="left:404.02px;top:255.27px;font-size:6.50px;color:#4a4a4a;">128,79</div>
<div class="t" style="left:404.23px;top:287.27px;font-size:7.00px;color:#484848;">Março</div>
<div class="t" style="left:462.22px;top:270.30px;font-size:6.50px;color:#4a4a4a;">0,00</div>
<div class="t" style="left:461.54px;top:287.27px;font-size:7.00px;color:#484848;">Abril</div>
<div class="t" style="left:516.80px;top:270.30px;font-size:6.50px;color:#4a4a4a;">0,00</div>
<div class="t" style="left:515.54px;top:287.27px;font-size:7.00px;color:#484848;">Maio</div>
<div class="t" style="left:571.38px;top:270.30px;font-size:6.50px;color:#4a4a4a;">0,00</div>
<div class="t" style="left:568.17px;top:287.27px;font-size:7.00px;color:#484848;">Junho</div>
<div class="t" style="left:625.97px;top:270.30px;font-size:6.50px;color:#4a4a4a;">0,00</div>
<div class="t" style="left:623.93px;top:287.27px;font-size:7.00px;color:#484848;">Julho</div>
<div class="t" style="left:680.55px;top:270.30px;font-size:6.50px;color:#4a4a4a;">0,00</div>
<div class="t" style="left:675.98px;top:287.27px;font-size:7.00px;color:#484848;">Agosto</div>
<div class="t" style="left:735.13px;top:270.30px;font-size:6.50px;color:#4a4a4a;">0,00</div>
<div class="t" style="left:726.29px;top:287.27px;font-size:7.00px;color:#484848;">Setembro</div>
<div class="t" style="left:789.72px;top:270.30px;font-size:6.50px;color:#4a4a4a;">0,00</div>
<div class="t" style="left:783.40px;top:287.27px;font-size:7.00px;color:#484848;">Outubro</div>
<div class="t" style="left:844.30px;top:270.30px;font-size:6.50px;color:#4a4a4a;">0,00</div>
<div class="t" style="left:834.48px;top:287.27px;font-size:7.00px;color:#484848;">Novembro</div>
<div class="t" style="left:898.88px;top:270.30px;font-size:6.50px;color:#4a4a4a;">0,00</div>
<div class="t" style="left:889.06px;top:287.27px;font-size:7.00px;color:#484848;">Dezembro</div>
<div class="a" style="left:274px;top:320.5px;width:677px;height:15px;background:#595959;"></div>
<div class="t" style="left:284.50px;top:323.00px;font-size:10.75px;color:#fff; font-weight:bold;">Gastos por mês</div>
<div class="a" style="left:273.5px;top:335px;width:679px;height:109.5px;background:#fff;border:1px solid #e2e2e2;border-top:none"></div>
<div class="a" style="left:280.6px;top:347px;width:656.4px;height:62px;background:#d9d9d9;"></div>
<div class="a" style="left:292.0px;top:366.4px;width:32px;height:42.6px;background:#ef4630;"></div>
<div class="t" style="left:290.24px;top:356.27px;font-size:6.50px;color:#4a4a4a;">R$ 2.750,00</div>
<div class="t" style="left:296.47px;top:416.27px;font-size:7.00px;color:#484848;">Janeiro</div>
<div class="a" style="left:346.7px;top:354.8px;width:32px;height:54.2px;background:#ef4630;"></div>
<div class="t" style="left:344.94px;top:344.65px;font-size:6.50px;color:#4a4a4a;">R$ 3.500,00</div>
<div class="t" style="left:347.87px;top:416.27px;font-size:7.00px;color:#484848;">Fevereiro</div>
<div class="a" style="left:401.4px;top:395.8px;width:32px;height:13.2px;background:#ef4630;"></div>
<div class="t" style="left:402.35px;top:385.72px;font-size:6.50px;color:#4a4a4a;">R$ 850,00</div>
<div class="t" style="left:407.63px;top:416.27px;font-size:7.00px;color:#484848;">Março</div>
<div class="t" style="left:460.67px;top:398.90px;font-size:6.50px;color:#4a4a4a;">R$ 0,00</div>
<div class="t" style="left:465.05px;top:416.27px;font-size:7.00px;color:#484848;">Abril</div>
<div class="t" style="left:515.37px;top:398.90px;font-size:6.50px;color:#4a4a4a;">R$ 0,00</div>
<div class="t" style="left:519.16px;top:416.27px;font-size:7.00px;color:#484848;">Maio</div>
<div class="t" style="left:570.07px;top:398.90px;font-size:6.50px;color:#4a4a4a;">R$ 0,00</div>
<div class="t" style="left:571.91px;top:416.27px;font-size:7.00px;color:#484848;">Junho</div>
<div class="t" style="left:624.77px;top:398.90px;font-size:6.50px;color:#4a4a4a;">R$ 0,00</div>
<div class="t" style="left:627.78px;top:416.27px;font-size:7.00px;color:#484848;">Julho</div>
<div class="t" style="left:679.47px;top:398.90px;font-size:6.50px;color:#4a4a4a;">R$ 0,00</div>
<div class="t" style="left:679.95px;top:416.27px;font-size:7.00px;color:#484848;">Agosto</div>
<div class="t" style="left:734.17px;top:398.90px;font-size:6.50px;color:#4a4a4a;">R$ 0,00</div>
<div class="t" style="left:730.38px;top:416.27px;font-size:7.00px;color:#484848;">Setembro</div>
<div class="t" style="left:788.87px;top:398.90px;font-size:6.50px;color:#4a4a4a;">R$ 0,00</div>
<div class="t" style="left:787.60px;top:416.27px;font-size:7.00px;color:#484848;">Outubro</div>
<div class="t" style="left:843.57px;top:398.90px;font-size:6.50px;color:#4a4a4a;">R$ 0,00</div>
<div class="t" style="left:838.81px;top:416.27px;font-size:7.00px;color:#484848;">Novembro</div>
<div class="t" style="left:898.27px;top:398.90px;font-size:6.50px;color:#4a4a4a;">R$ 0,00</div>
<div class="t" style="left:893.51px;top:416.27px;font-size:7.00px;color:#484848;">Dezembro</div>
<div class="a" style="left:579.5px;top:436.3px;width:4.5px;height:4.2px;background:#ef4630;"></div>
<div class="t" style="left:586.00px;top:435.02px;font-size:7.19px;color:#404040;">Valor abastecido</div>
</body></html>
